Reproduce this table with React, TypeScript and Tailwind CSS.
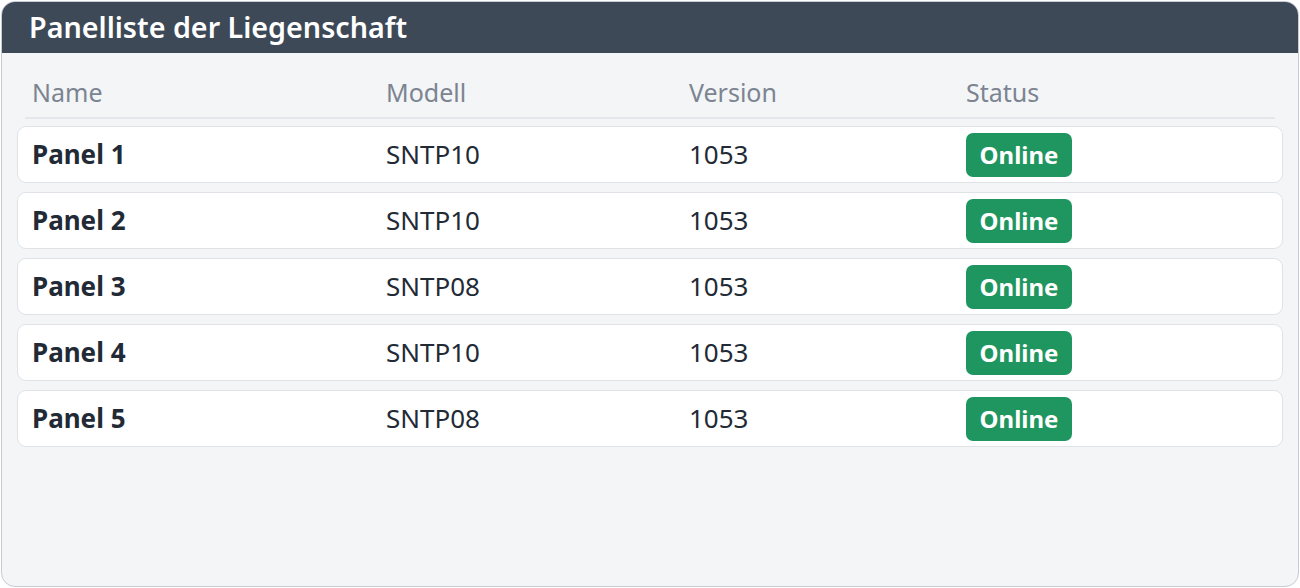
import React from "react"

const panels = [
  { name: "Panel 1", model: "SNTP10", version: "1053" },
  { name: "Panel 2", model: "SNTP10", version: "1053" },
  { name: "Panel 3", model: "SNTP08", version: "1053" },
  { name: "Panel 4", model: "SNTP10", version: "1053" },
  { name: "Panel 5", model: "SNTP08", version: "1053" },
]

const cols = "grid grid-cols-[354px_303px_277px_1fr] items-center"

export default function App() {
  return (
    <div className="h-[588px] w-[1300px] p-px" style={{ fontFamily: '"Noto Sans", sans-serif' }}>
      <div className="flex h-full flex-col overflow-hidden rounded-[14px] border border-[#c6cbd4] bg-[#f3f5f7]">
        {/* Header */}
        <div className="flex h-[51px] shrink-0 items-center bg-[#3d4957] px-[27px]">
          <h1 className="text-[28.7px] leading-none font-semibold text-white">Panelliste der Liegenschaft</h1>
        </div>

        <div className="px-[15px]">
          <div
            className={`${cols} mx-[8px] border-b-2 border-[#e3e7eb] pr-[6px] pl-[7px] pt-[22px] pb-[8px] text-[25px] leading-[34px] text-[#7c8491]`}
          >
            <span>Name</span>
            <span>Modell</span>
            <span>Version</span>
            <span>Status</span>
          </div>

          <div className="mt-[7px] flex flex-col gap-[9px]">
            {panels.map((p) => (
              <div
                key={p.name}
                className={`${cols} h-[57px] rounded-[9px] border border-[#dfe3e8] bg-white pr-[13px] pl-[14px] text-[26px] text-[#222a36]`}
              >
                <span className="font-bold">{p.name}</span>
                <span>{p.model}</span>
                <span>{p.version}</span>
                <span>
                  <span className="inline-flex h-[44px] w-[106px] items-center justify-center rounded-[7px] bg-[#1f9660] text-[24px] font-bold text-white">
                    Online
                  </span>
                </span>
              </div>
            ))}
          </div>
        </div>
      </div>
    </div>
  )
}
